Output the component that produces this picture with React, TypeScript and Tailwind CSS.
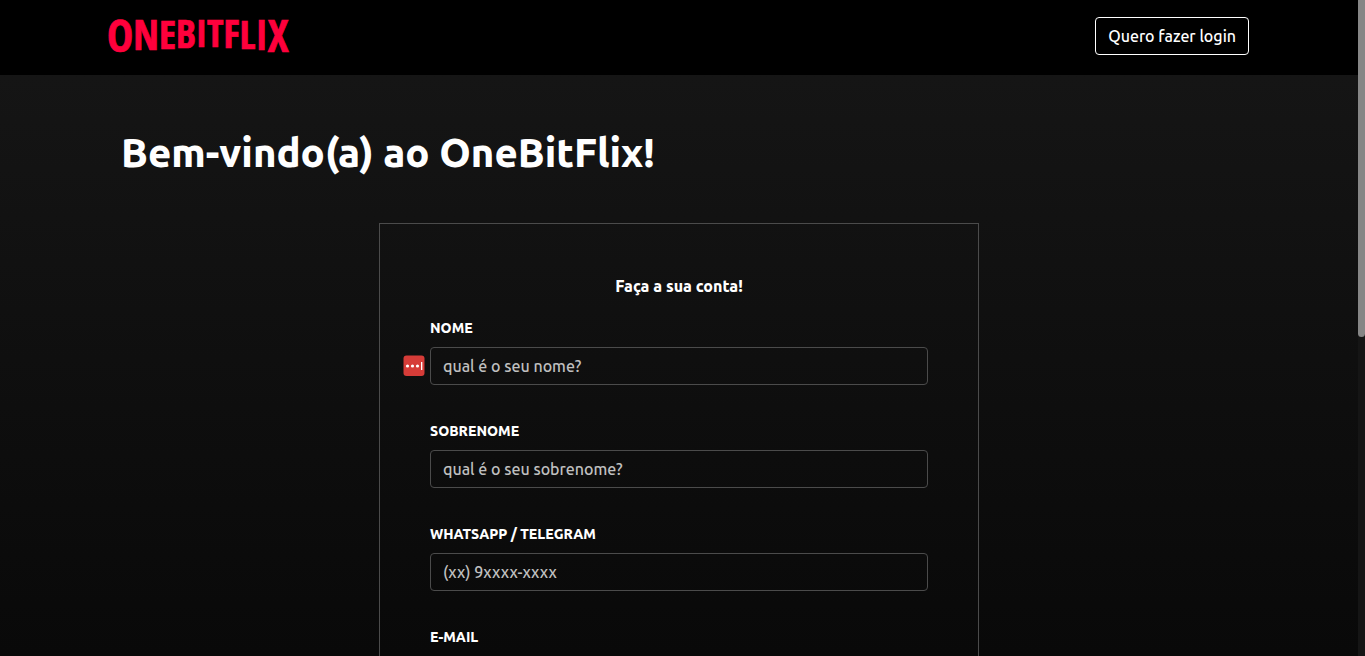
import React from "react";

const fields = [
  { id: "firstName", label: "NOME", placeholder: "qual é o seu nome?", badge: true },
  { id: "lastName", label: "SOBRENOME", placeholder: "qual é o seu sobrenome?" },
  { id: "phone", label: "WHATSAPP / TELEGRAM", placeholder: "(xx) 9xxxx-xxxx" },
  { id: "email", label: "E-MAIL", placeholder: "" },
];

function Logo() {
  return (
    <svg className="-ml-2" width="200" height="70" viewBox="0 0 200 70" role="img" aria-label="ONEBITFLIX">
      <text
        x="6"
        fill="#ff003c"
        stroke="#ff003c"
        strokeWidth="0.7"
        fontFamily="'Open Sans Condensed', 'Roboto Condensed', sans-serif"
        fontWeight="700"
      >
        <tspan y="52" fontSize="44">O</tspan>
        <tspan y="50" fontSize="41">N</tspan>
        <tspan y="49" fontSize="40">E</tspan>
        <tspan y="48" fontSize="39">B</tspan>
        <tspan y="47" fontSize="38">I</tspan>
        <tspan y="47" fontSize="38">T</tspan>
        <tspan y="48" fontSize="39">F</tspan>
        <tspan y="49" fontSize="40">L</tspan>
        <tspan y="50" fontSize="41">I</tspan>
        <tspan y="52" fontSize="44">X</tspan>
      </text>
    </svg>
  );
}

function PasswordManagerBadge() {
  return (
    <svg className="absolute top-2 -left-7" width="23" height="22" viewBox="0 0 23 22" aria-hidden="true">
      <rect x="1.5" y="0.5" width="21" height="20.5" rx="3" fill="#d63c38" />
      <circle cx="5.5" cy="11" r="1.6" fill="#fff" />
      <circle cx="10.5" cy="11" r="1.6" fill="#fff" />
      <circle cx="15.5" cy="11" r="1.6" fill="#fff" />
      <rect x="19" y="7" width="1.3" height="8" fill="#fff" />
    </svg>
  );
}

export default function App() {
  return (
    <div className="flex h-screen overflow-hidden bg-[#0c0c0c] font-[Ubuntu,'Noto_Sans',sans-serif] text-base font-[475] text-white">
      <div className="flex min-w-0 flex-1 flex-col">
        <header className="shrink-0 bg-black">
          <div className="mx-auto flex h-[75px] max-w-[1140px] items-start justify-between">
            <a href="#home">
              <Logo />
            </a>
            <button type="button" className="mt-[17px] h-[38px] rounded border border-white px-3 text-base leading-6">
              Quero fazer login
            </button>
          </div>
        </header>
        <main className="min-h-0 flex-1 overflow-hidden bg-linear-to-b from-[#151515] to-[#090909]">
          <div className="mx-auto max-w-[1140px] px-3 pt-[53px]">
            <h1 className="mb-[45px] text-[40px] leading-[50px] font-extrabold">Bem-vindo(a) ao OneBitFlix!</h1>
            <form className="mx-auto max-w-[600px] border border-[#4b4b4b] p-[50px]">
              <h2 className="mb-5 text-center text-base leading-6 font-extrabold">Faça a sua conta!</h2>
              {fields.map((field) => (
                <div key={field.id} className="mb-9">
                  <label htmlFor={field.id} className="mb-2 block text-sm leading-[21px] font-extrabold">
                    {field.label}
                  </label>
                  <div className="relative">
                    {field.badge && <PasswordManagerBadge />}
                    <input
                      id={field.id}
                      placeholder={field.placeholder}
                      className="block h-[38px] w-full rounded border border-[#4b4b4b] bg-transparent px-3 text-base placeholder:text-[#c0c0c0]"
                    />
                  </div>
                </div>
              ))}
            </form>
          </div>
        </main>
      </div>
      <div className="w-[7px] shrink-0 bg-[#151515]" aria-hidden="true">
        <div className="h-[337px] rounded-b bg-[#868686]" />
      </div>
    </div>
  );
}
